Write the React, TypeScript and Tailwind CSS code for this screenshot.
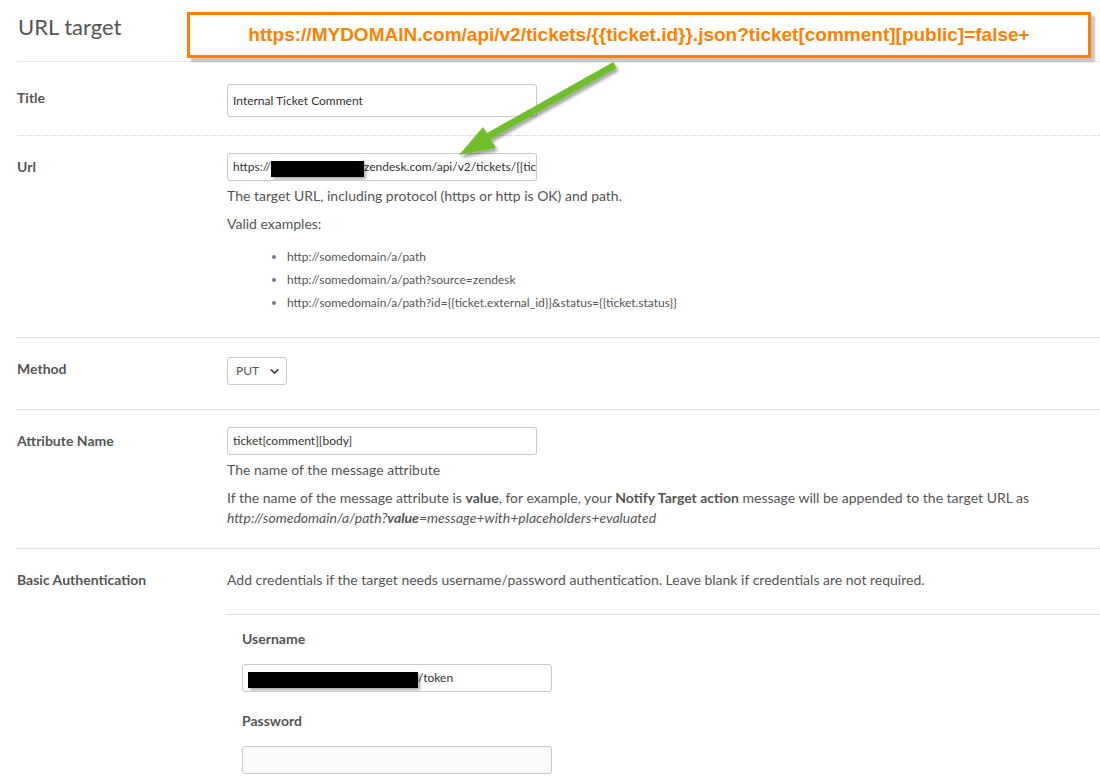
import { ChevronDown } from "lucide-react";
import type { ReactNode } from "react";

const font = { fontFamily: 'Lato, "Liberation Sans", Arial, sans-serif' };

function Row({ label, children, top = "pt-[17px]", bottom = "pb-5", last = false }: {
  label: string;
  children: ReactNode;
  top?: string;
  bottom?: string;
  last?: boolean;
}) {
  return (
    <div className={`flex ${top} ${bottom} ${last ? "" : "border-b border-dotted border-[#c8c8c8]"}`}>
      <div className="w-[210px] shrink-0 text-[14px] leading-7 font-bold text-[#555]">{label}</div>
      <div className="flex-1 min-w-0">{children}</div>
    </div>
  );
}

function Field({ children, tall = false, muted = false }: { children?: ReactNode; tall?: boolean; muted?: boolean }) {
  return (
    <div
      className={`w-[310px] ${tall ? "h-[33px]" : "h-7"} ${muted ? "bg-[#fafafa]" : "bg-white"} border border-[#c9c9c9] rounded-[3px] px-[5px] flex items-center overflow-hidden whitespace-nowrap text-[12px] text-[#333]`}
    >
      {children}
    </div>
  );
}

function Redacted({ w }: { w: number }) {
  return (
    <span
      className="inline-block shrink-0 h-[16px] bg-black translate-y-[2px] shadow-[2px_2px_3px_rgba(0,0,0,0.35)]"
      style={{ width: w }}
    />
  );
}

function Arrow() {
  return (
    <svg className="absolute left-0 top-0 pointer-events-none" width="1100" height="200" viewBox="0 0 1100 200">
      <defs>
        <filter id="sh" x="-10%" y="-10%" width="130%" height="130%">
          <feDropShadow dx="2" dy="3" stdDeviation="1.5" floodColor="#000" floodOpacity="0.35" />
        </filter>
      </defs>
      <g filter="url(#sh)" fill="#6fbe2c">
        <line x1="615" y1="65" x2="480" y2="141" stroke="#6fbe2c" strokeWidth="7" />
        <polygon points="459,155 483,127 496,148" />
      </g>
    </svg>
  );
}

export default function App() {
  return (
    <div className="relative w-[1100px] h-[783px] overflow-hidden bg-white text-[#555]" style={font}>
      <div className="pl-[17px]">
        <div className="h-[62px] pt-[12px] border-b border-[#e6e6e6]">
          <h1 className="text-[22px] leading-[30px] text-[#555] pl-px">URL target</h1>
        </div>

        <Row label="Title" top="pt-[22px]" bottom="pb-[18px]">
          <Field tall>Internal Ticket Comment</Field>
        </Row>

        <Row label="Url" bottom="pb-[23px]">
          <Field>
            <span className="shrink-0">https://</span>
            <Redacted w={93} />
            <span className="shrink-0">zendesk.com/api/v2/tickets/{"{{"}tic</span>
          </Field>
          <p className="mt-[5px] text-[14px] leading-5">The target URL, including protocol (https or http is OK) and path.</p>
          <p className="mt-2 text-[14px] leading-5">Valid examples:</p>
          <ul className="mt-[11px] pl-[60px] list-disc text-[12px] leading-[23px] marker:text-[#777]">
            <li>http://somedomain/a/path</li>
            <li>http://somedomain/a/path?source=zendesk</li>
            <li>http://somedomain/a/path?id={"{{"}ticket.external_id{"}}"}&amp;status={"{{"}ticket.status{"}}"}</li>
          </ul>
        </Row>

        <Row label="Method" bottom="pb-[24px]">
          <div className="mt-[2px] w-[60px] h-7 border border-[#c9c9c9] rounded-[3px] bg-white flex items-center justify-between pl-[8px] pr-[5px] text-[12px] text-[#555]">
            <span>PUT</span>
            <ChevronDown size={13} strokeWidth={3} className="text-[#444]" />
          </div>
        </Row>

        <Row label="Attribute Name" bottom="pb-[20px]">
          <Field>ticket[comment][body]</Field>
          <p className="mt-[5px] text-[14px] leading-5">The name of the message attribute</p>
          <p className="mt-2 text-[14px] leading-5">
            If the name of the message attribute is <b className="font-bold">value</b>, for example, your{" "}
            <b className="font-bold">Notify Target action</b> message will be appended to the target URL as
            <br />
            <i>
              http://somedomain/a/path?<b className="font-bold">value</b>=message+with+placeholders+evaluated
            </i>
          </p>
        </Row>

        <Row label="Basic Authentication" bottom="pb-0" last>
          <p className="text-[14px] leading-7">
            Add credentials if the target needs username/password authentication. Leave blank if credentials are not required.
          </p>
          <div className="mt-5 border-t border-dotted border-[#c8c8c8] pl-[15px] pt-[14px]">
            <div className="text-[14px] leading-5 font-bold text-[#555]">Username</div>
            <div className="mt-[15px]">
              <Field>
                <Redacted w={170} />
                /token
              </Field>
            </div>
            <div className="mt-[19px] text-[14px] leading-5 font-bold text-[#555]">Password</div>
            <div className="mt-[15px]">
              <Field muted />
            </div>
          </div>
        </Row>
      </div>

      <div className="absolute left-[187px] top-[12px] w-[904px] h-[46px] border-[3px] border-[#ff8000] bg-white shadow-[4px_4px_2px_rgba(0,0,0,0.22)] flex items-center justify-center">
        <span
          className="text-[19px] font-bold text-[#ff8000] whitespace-nowrap"
          style={{ fontFamily: '"Liberation Sans", Arial, sans-serif' }}
        >
          https://MYDOMAIN.com/api/v2/tickets/{"{{"}ticket.id{"}}"}.json?ticket[comment][public]=false+
        </span>
      </div>
      <Arrow />
    </div>
  );
}
